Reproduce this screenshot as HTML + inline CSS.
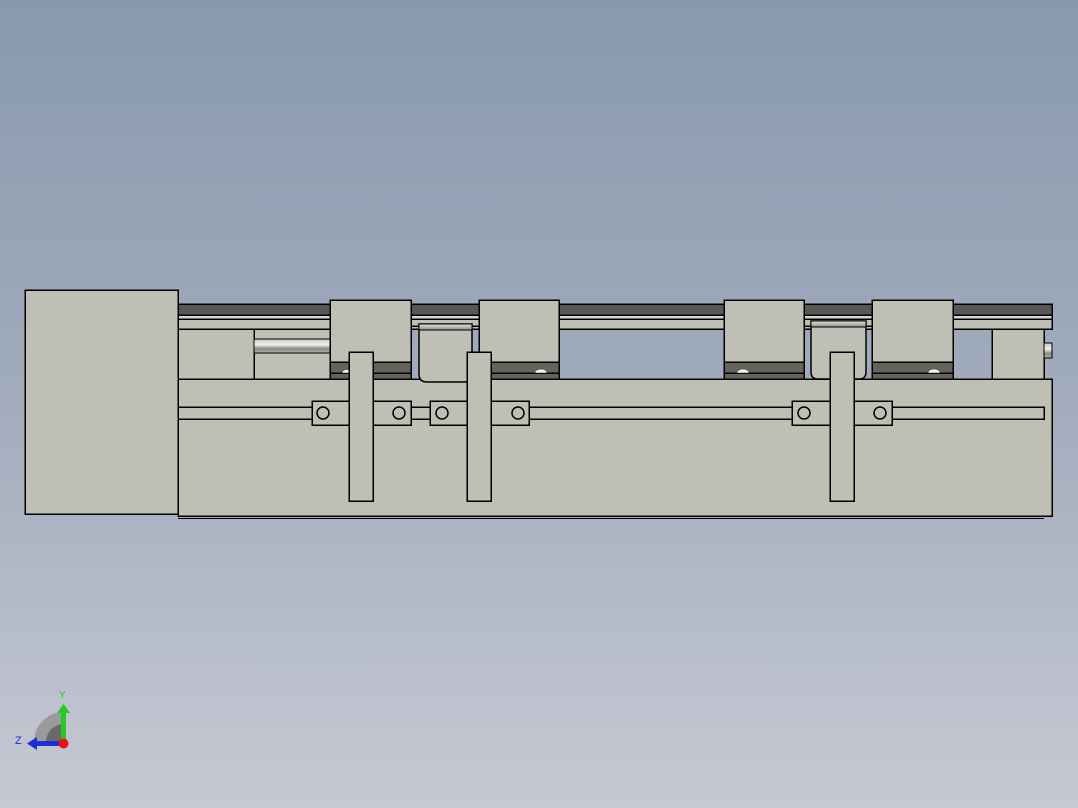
<!DOCTYPE html>
<html><head><meta charset="utf-8"><style>
html,body{margin:0;padding:0;width:1078px;height:808px;overflow:hidden}
svg{display:block}
</style></head><body>
<svg width="1078" height="808" viewBox="0 0 1078 808" xmlns="http://www.w3.org/2000/svg">
<defs>
<linearGradient id="bg" x1="0" y1="0" x2="0" y2="1">
<stop offset="0" stop-color="#8899ad"/><stop offset="0.5" stop-color="#a2acbd"/><stop offset="1" stop-color="#c6c9d3"/>
</linearGradient>
<linearGradient id="shaft" x1="0" y1="0" x2="0" y2="1">
<stop offset="0" stop-color="#c8c8c0"/><stop offset="0.4" stop-color="#f0f0ea"/><stop offset="0.7" stop-color="#8a8a84"/><stop offset="1" stop-color="#b0b0a8"/>
</linearGradient>
<linearGradient id="bar" x1="0" y1="0" x2="0" y2="1">
<stop offset="0" stop-color="#e8e8e2"/><stop offset="1" stop-color="#8c8c86"/>
</linearGradient>
</defs>
<rect width="1078" height="808" fill="url(#bg)"/>
<g stroke="#000" stroke-width="1.5" fill="#bfbfb5" shape-rendering="crispEdges">
<rect x="178" y="304" width="874" height="11" fill="#585858"/>
<rect x="178" y="315" width="874" height="4" fill="#d6d6ce"/>
<rect x="178" y="319" width="874" height="10"/>
<rect x="178" y="329" width="76" height="50"/>
<rect x="254" y="329" width="76" height="50"/>
<rect x="254" y="339" width="76" height="14" fill="url(#shaft)" stroke-width="1"/>
<rect x="992" y="329" width="52" height="50"/>
<rect x="1044" y="343" width="8" height="15" fill="url(#shaft)" stroke-width="1"/>
<rect x="178" y="518" width="866" height="1" fill="#000" stroke="none"/>
<rect x="178" y="379" width="874" height="137"/>
<rect x="178" y="407" width="866" height="12"/>
<rect x="25" y="290" width="153" height="224"/>
<rect x="411" y="319" width="68" height="7"/>
<rect x="330" y="300" width="81" height="79"/>
<rect x="330" y="362" width="81" height="17" fill="#64645c"/>
<line x1="330" y1="373" x2="411" y2="373"/>
<rect x="479" y="300" width="80" height="79"/>
<rect x="479" y="362" width="80" height="17" fill="#64645c"/>
<line x1="479" y1="373" x2="559" y2="373"/>
<rect x="804" y="319" width="68" height="7"/>
<rect x="724" y="300" width="80" height="79"/>
<rect x="724" y="362" width="80" height="17" fill="#64645c"/>
<line x1="724" y1="373" x2="804" y2="373"/>
<rect x="872" y="300" width="81" height="79"/>
<rect x="872" y="362" width="81" height="17" fill="#64645c"/>
<line x1="872" y1="373" x2="953" y2="373"/>
</g>
<g stroke="#000" stroke-width="1.5" fill="#bfbfb5">
<path d="M419 324 H472 V374 Q472 382 464 382 H427 Q419 382 419 374 Z"/>
<rect x="419" y="324" width="53" height="6" fill="url(#bar)" stroke-width="1"/>
<path d="M811 321 H866 V372 Q866 379 859 379 H818 Q811 379 811 372 Z"/>
<rect x="811" y="321" width="55" height="6" fill="url(#bar)" stroke-width="1"/>
</g>
<g fill="#f2f2f2" stroke="#333" stroke-width="0.5">
<path d="M342 373 a5 3.5 0 0 1 10 0 Z"/>
<path d="M535 373 a6 4 0 0 1 12 0 Z"/>
<path d="M737 373 a6 4 0 0 1 12 0 Z"/>
<path d="M928 373 a6 4 0 0 1 12 0 Z"/>
</g>
<g stroke="#000" stroke-width="1.5" fill="#bfbfb5">
<g shape-rendering="crispEdges">
<rect x="312" y="401" width="99" height="24"/>
<rect x="430" y="401" width="99" height="24"/>
<rect x="792" y="401" width="100" height="24"/>
</g>
<circle cx="323" cy="413" r="6"/><circle cx="399" cy="413" r="6"/>
<circle cx="442" cy="413" r="6"/><circle cx="518" cy="413" r="6"/>
<circle cx="804" cy="413" r="6"/><circle cx="880" cy="413" r="6"/>
<g shape-rendering="crispEdges">
<rect x="349" y="352" width="24" height="149"/>
<rect x="467" y="352" width="24" height="149"/>
<rect x="830" y="352" width="24" height="149"/>
</g>
</g>
<path d="M34 742 A30 30 0 0 1 64 712 V742 Z" fill="#9a9a9a"/>
<path d="M46 742 A18 18 0 0 1 64 724 V742 Z" fill="#6a6a6a"/>
<rect x="61" y="712" width="5" height="30" fill="#22cc22"/>
<path d="M57 713 L63.5 704 L70 713 Z" fill="#22cc22"/>
<rect x="36" y="741" width="27" height="5" fill="#1a2fd8"/>
<path d="M37 737 L27 743.5 L37 750 Z" fill="#1a2fd8"/>
<circle cx="63.5" cy="743.5" r="5" fill="#ee1111"/>
<text x="59" y="698" font-family="Liberation Sans, sans-serif" font-size="10" fill="#22cc22">Y</text>
<text x="15" y="744" font-family="Liberation Sans, sans-serif" font-size="11" fill="#1a2fd8">Z</text>
</svg>
</body></html>
